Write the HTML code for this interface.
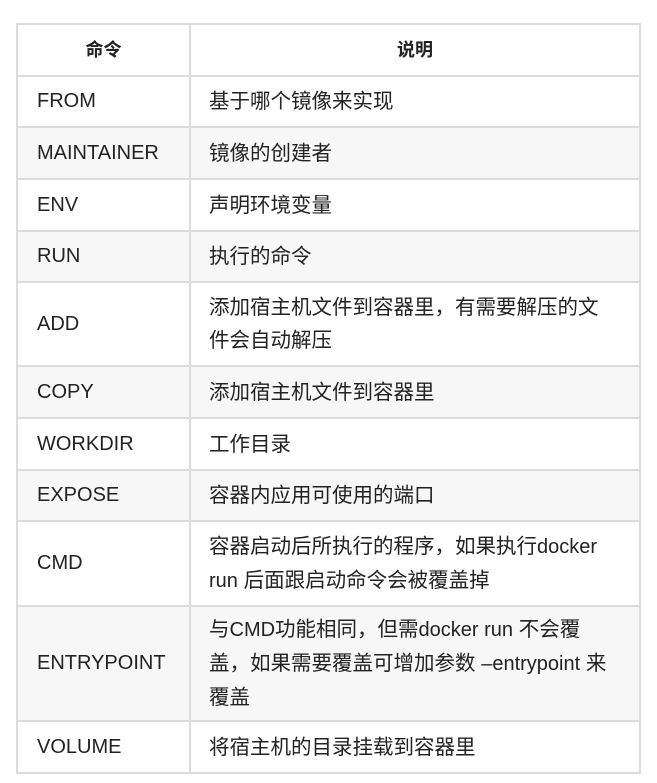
<!DOCTYPE html>
<html><head><meta charset="utf-8"><style>
body{margin:0;background:#fff;width:657px;height:783px;overflow:hidden;font-family:"Liberation Sans","Noto Sans CJK SC",sans-serif;color:#222;}
table{position:absolute;left:16px;top:23px;width:625px;border-collapse:collapse;font-size:20.5px;table-layout:fixed;}
td,th{border:2px solid #dcdcdc;padding:0 4px 0 18px;text-align:left;line-height:33px;overflow:hidden;white-space:nowrap;}
th{text-align:center;font-weight:bold;font-size:18px;padding:0;}
col.a{width:173px;}
td:first-child{font-size:20px;padding-left:19px;}
tr.g td{background:#f7f7f7;}
.l{font-size:20px;}
</style></head><body>
<table>
<colgroup><col class="a"><col></colgroup>
<tr style="height:52px"><th>命令</th><th>说明</th></tr>
<tr style="height:51px"><td>FROM</td><td>基于哪个镜像来实现</td></tr>
<tr class="g" style="height:52px"><td>MAINTAINER</td><td>镜像的创建者</td></tr>
<tr style="height:52px"><td>ENV</td><td>声明环境变量</td></tr>
<tr class="g" style="height:51px"><td>RUN</td><td>执行的命令</td></tr>
<tr style="height:84px"><td>ADD</td><td>添加宿主机文件到容器里，有需要解压的文<br>件会自动解压</td></tr>
<tr class="g" style="height:52px"><td>COPY</td><td>添加宿主机文件到容器里</td></tr>
<tr style="height:52px"><td>WORKDIR</td><td>工作目录</td></tr>
<tr class="g" style="height:51px"><td>EXPOSE</td><td>容器内应用可使用的端口</td></tr>
<tr style="height:85px"><td>CMD</td><td>容器启动后所执行的程序，如果执行<span class="l">docker</span><br><span class="l">run</span> 后面跟启动命令会被覆盖掉</td></tr>
<tr class="g" style="height:115px"><td>ENTRYPOINT</td><td>与<span class="l">CMD</span>功能相同，但需<span class="l">docker run</span> 不会覆<br>盖，如果需要覆盖可增加参数 <span class="l">–entrypoint</span> 来<br>覆盖</td></tr>
<tr style="height:52px"><td>VOLUME</td><td>将宿主机的目录挂载到容器里</td></tr>
</table>
</body></html>
